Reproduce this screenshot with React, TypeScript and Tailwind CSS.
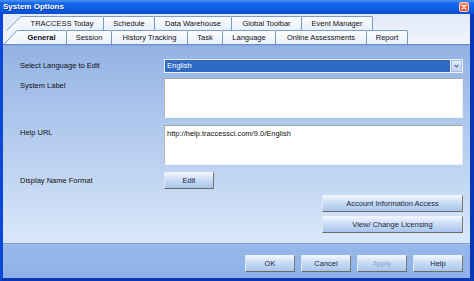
import React from "react";

const row1 = [
  { label: "TRACCESS Today", cls: "w-[83px]" },
  { label: "Schedule", cls: "w-[51px]" },
  { label: "Data Warehouse", cls: "w-[77px]" },
  { label: "Global Toolbar", cls: "w-[70px]" },
  { label: "Event Manager", cls: "w-[71px]" },
];

const row2 = [
  { label: "General", cls: "w-[50px]", bold: true },
  { label: "Session", cls: "w-[45px]" },
  { label: "History Tracking", cls: "w-[76px]" },
  { label: "Task", cls: "w-[35px]" },
  { label: "Language", cls: "w-[53px]" },
  { label: "Online Assessments", cls: "w-[91px]" },
  { label: "Report", cls: "w-[41px]" },
];

function Tab({ label, cls, bold }: { label: string; cls: string; bold?: boolean }) {
  return (
    <div
      className={
        "h-full shrink-0 border-t border-r border-[#7d99c6] rounded-tr-[2px] flex items-center justify-center text-[7.5px] leading-none text-[#111] bg-[linear-gradient(to_bottom,#fbfdff,#e9f0fa)] " +
        cls +
        (bold ? " font-bold" : "")
      }
    >
      {label}
    </div>
  );
}

function Slant({ w }: { w: number }) {
  return (
    <svg width={w} height={14} className="shrink-0 block">
      <polygon points={`0,14 ${w},0.5 ${w},14`} fill="#f3f7fd" />
      <line x1={0} y1={14} x2={w} y2={0.5} stroke="#7d99c6" strokeWidth={1} />
    </svg>
  );
}

function Btn({ label, cls = "w-[50px]", disabled }: { label: string; cls?: string; disabled?: boolean }) {
  return (
    <div
      className={
        "h-[17px] shrink-0 flex items-center justify-center text-[7.5px] leading-none border border-t-[#eef3fb] border-l-[#dfe7f3] border-r-[#7a796c] border-b-[#6e6d62] bg-[linear-gradient(to_bottom,#f2f6fd,#cddef5_40%,#a9c5ed)] " +
        cls +
        (disabled ? " text-[#8da3c4]" : " text-[#1b2740]")
      }
    >
      {label}
    </div>
  );
}

export default function App() {
  return (
    <div className="w-[474px] h-[281px] flex flex-col overflow-hidden font-['Liberation_Sans',Arial,sans-serif]">
      {/* Title bar */}
      <div className="h-[14px] shrink-0 flex items-center justify-between pl-[3px] pr-[5px] bg-[linear-gradient(to_bottom,#4a93f7,#1565e6_25%,#0b5ae0_70%,#0a4fd2)]">
        <span className="text-[8px] font-bold text-white leading-none [text-shadow:1px_1px_0_#0a3a9a]">
          System Options
        </span>
        <div className="w-[10px] h-[10px] rounded-[2px] border border-[#f4d8cc] bg-[linear-gradient(to_bottom,#ee7d55,#d9461e)] flex items-center justify-center">
          <svg width="6" height="6" viewBox="0 0 6 6">
            <path d="M1 1L5 5M5 1L1 5" stroke="white" strokeWidth="1.4" strokeLinecap="round" />
          </svg>
        </div>
      </div>

      {/* Window body */}
      <div className="flex-1 flex flex-col border-l-[3px] border-r-[4px] border-b-[3px] border-l-[#0c48d8] border-r-[#0a38b5] border-b-[#0a38b5]">
        {/* Tabs */}
        <div className="h-[32px] shrink-0 flex flex-col pt-[2px] bg-[linear-gradient(to_bottom,#e2eaf8,#f1f5fd)]">
          <div className="h-[14px] flex pl-[4px]">
            <Slant w={14} />
            {row1.map((t) => (
              <Tab key={t.label} {...t} />
            ))}
          </div>
          <div className="h-[14px] flex pl-[1px]">
            <Slant w={13} />
            {row2.map((t) => (
              <Tab key={t.label} {...t} />
            ))}
          </div>
          <div className="h-px bg-[#6d8fc8]" />
          <div className="h-px bg-[#86a6da]" />
        </div>

        {/* Content */}
        <div className="flex-1 flex flex-col pl-[17px] pr-[7px] pt-[13px] text-[7.5px] leading-none text-[#111] bg-[linear-gradient(to_bottom,#93b3e4,#d9e7fa)]">
          <div className="flex items-center h-[14px]">
            <div className="w-[144px] shrink-0">Select Language to Edit</div>
            <div className="flex-1 h-full flex border border-[#e9f0fa] bg-[#e9f0fa]">
              <div className="flex-1 bg-[#316ac5] text-white flex items-center pl-[2px]">English</div>
              <div className="w-[11px] ml-px border border-[#a9bfe6] bg-[linear-gradient(to_bottom,#e4edfc,#bed3f3)] flex items-center justify-center">
                <svg width="5" height="4" viewBox="0 0 5 4">
                  <path d="M0.5 0.8L2.5 2.8L4.5 0.8" stroke="#4d6185" strokeWidth="1.2" fill="none" />
                </svg>
              </div>
            </div>
          </div>

          <div className="flex mt-[5px] h-[40px]">
            <div className="w-[144px] shrink-0 pt-[4px]">System Label</div>
            <div className="flex-1 bg-white border border-t-[#a3a3a3] border-l-[#b5b5b5] border-r-[#e8eef8] border-b-[#f0f4fb]" />
          </div>

          <div className="flex mt-[7px] h-[40px]">
            <div className="w-[144px] shrink-0 pt-[4px]">Help URL</div>
            <div className="flex-1 bg-white border border-t-[#a3a3a3] border-l-[#b5b5b5] border-r-[#e8eef8] border-b-[#f0f4fb] pl-[2px] pt-[4px]">
              http://help.traccessci.com/9.0/English
            </div>
          </div>

          <div className="flex items-center mt-[7px] h-[17px]">
            <div className="w-[144px] shrink-0">Display Name Format</div>
            <Btn label="Edit" />
          </div>

          <div className="flex flex-col items-end gap-[4px] mt-[6px]">
            <Btn label="Account Information Access" cls="w-[141px]" />
            <Btn label="View/ Change Licensing" cls="w-[141px]" />
          </div>
        </div>

        {/* Separator */}
        <div className="h-px bg-[#7d9bcd]" />
        <div className="h-px bg-[#a9c4ee]" />

        {/* Bottom bar */}
        <div className="h-[33px] shrink-0 flex justify-end items-start gap-[6px] pt-[10px] pr-[7px] bg-[linear-gradient(to_bottom,#97b8ea,#8eb1e7)]">
          <Btn label="OK" />
          <Btn label="Cancel" />
          <Btn label="Apply" disabled />
          <Btn label="Help" />
        </div>
      </div>
    </div>
  );
}
